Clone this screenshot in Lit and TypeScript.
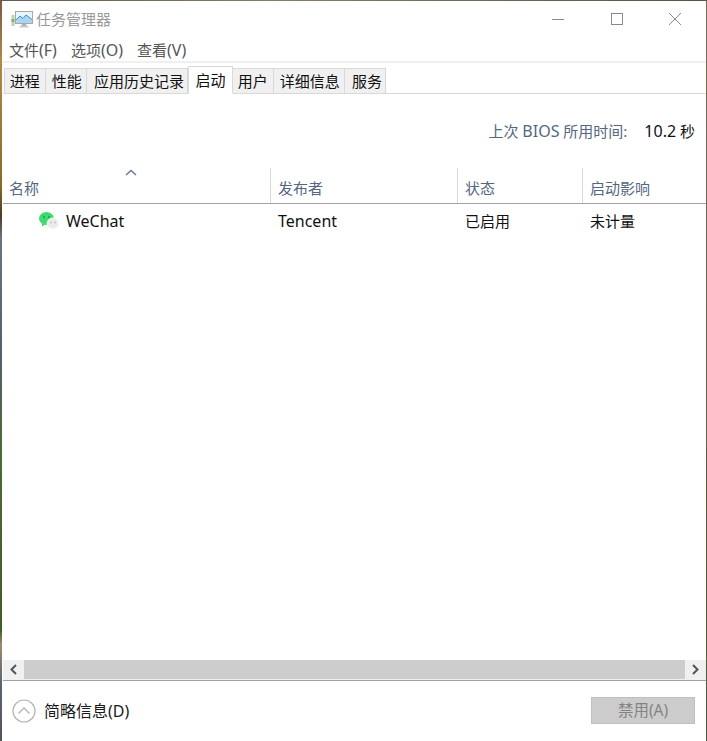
import { LitElement, html, css, svg } from "lit";
import { customElement } from "lit/decorators.js";

const tabs = [
  ["进程", 41.5, 0], ["性能", 41.5, 2], ["应用历史记录", 101, 4], ["启动", 45, 0], ["用户", 40.5, 0], ["详细信息", 71.5, 2], ["服务", 41, 4],
] as const;

@customElement("app-root")
export class AppRoot extends LitElement {
  static styles = css`
    :host { display: block; width: 707px; height: 741px; overflow: hidden; font-family: "Noto Sans", "Noto Sans CJK SC", sans-serif; background: #fff; }
    .frame { height: 741px; display: flex; flex-direction: column; }
    .topedge { height: 1px; flex: none; background: linear-gradient(90deg, #6b5a4a, #8a7a68 40%, #5c5048); }
    .mid { flex: 1; display: flex; min-height: 0; }
    .ledge { width: 2px; flex: none; background: linear-gradient(180deg, #7a5a45 0%, #b08a4a 8%, #8a6a2a 25%, #4a3c28 29%, #6a7484 32%, #55606a 48%, #4c6a3a 60%, #3e5e2c 85%, #a08a70 87%, #5c6470 92%, #50565c 100%); }
    .redge { width: 1px; flex: none; background: linear-gradient(180deg, #7a6a55 0%, #6a5a3c 50%, #4c5a3c 100%); }
    .win { flex: 1; min-width: 0; display: flex; flex-direction: column; background: #fff; padding-left: 1px; }
    .l { font-size: 16px; }
    .title { height: 38px; flex: none; display: flex; align-items: center; padding: 0 0 3px 8px; box-sizing: border-box; color: #999; font-size: 15px; }
    .title svg { margin-right: 3px; flex: none; }
    .caps { margin-left: auto; display: flex; align-items: center; }
    .cap { width: 58.5px; height: 35px; display: flex; align-items: center; justify-content: center; }
    .menu { height: 22px; flex: none; display: flex; align-items: center; padding-left: 6px; gap: 14px; font-size: 15px; color: #555; line-height: 20px; }
    .rule { height: 2px; flex: none; background: #f0f0f0; }
    .tabs { height: 31px; flex: none; display: flex; align-items: flex-end; padding-left: 1px; border-bottom: 1px solid #d9d9d9; box-sizing: border-box; }
    .tab { box-sizing: border-box; height: 26px; margin-bottom: -1px; padding-bottom: 2px; display: flex; align-items: center; justify-content: center; background: #f0f0f0; border: 1px solid #d9d9d9; border-left: 0; font-size: 15px; color: #111; }
    .tab:first-child { border-left: 1px solid #d9d9d9; }
    .tab.on { height: 28px; background: #fff; border-left: 1px solid #d9d9d9; border-bottom-color: #fff; position: relative; z-index: 1; }
    .body { flex: 1; min-height: 0; display: flex; flex-direction: column; }
    .bios { height: 74px; flex: none; display: flex; justify-content: flex-end; align-items: flex-start; padding: 26px 11px 0 0; box-sizing: border-box; font-size: 15px; color: #55677f; }
    .bios b { font-weight: 400; color: #111; margin-left: 17px; }
    .head { height: 36px; flex: none; display: grid; grid-template-columns: 268px 187px 125px 1fr; border-bottom: 1px solid #a0a0a0; box-sizing: border-box; font-size: 15px; color: #55677f; position: relative; }
    .hc { display: flex; align-items: flex-end; padding: 0 0 5px 7px; border-right: 1px solid #d9d9d9; line-height: 20px; }
    .hc:first-of-type { padding-left: 6px; }
    .hc:last-child { border-right: 0; }
    .sort { position: absolute; left: 121px; top: 0; }
    .row { height: 36px; flex: none; display: grid; grid-template-columns: 268px 187px 125px 1fr; align-items: center; font-size: 15px; color: #111; }
    .rc { padding-left: 7px; padding-bottom: 3px; line-height: 20px; }
    .rc.name { display: flex; align-items: center; padding-left: 36px; gap: 7px; }
    .rest { flex: 1; min-height: 0; }
    .sb { height: 20px; flex: none; display: flex; align-items: stretch; background: #f0f0f0; box-sizing: border-box; padding-bottom: 1px; }
    .sb .btn { width: 21px; flex: none; display: flex; align-items: center; justify-content: center; }
    .sb .thumb { flex: 1; background: #cdcdcd; }
    .foot { height: 61px; flex: none; border-top: 1px solid #a0a0a0; box-sizing: border-box; display: flex; align-items: center; padding: 0 11px 1px 9px; font-size: 16px; color: #1a1a1a; }
    .foot svg { margin-right: 8px; flex: none; }
    .foot span { padding-bottom: 2px; }
    .dis { margin-left: auto; width: 104px; height: 27px; padding-bottom: 2px; box-sizing: border-box; background: #cccccc; border: 1px solid #bfbfbf; display: flex; align-items: center; justify-content: center; color: #838383; font-size: 15.5px; }
  `;

  render() {
    return html`
      <div class="frame">
        <div class="topedge"></div>
        <div class="mid">
          <div class="ledge"></div>
          <div class="win">
            <div class="title">
              <svg width="22" height="18" viewBox="0 0 22 18">
                <rect x="0.5" y="5" width="3" height="11" fill="#c8c8c8"/>
                <rect x="0.5" y="9" width="3" height="3" fill="#6fc24a"/>
                <rect x="4.5" y="1.5" width="17" height="12" fill="#eaf4fb" stroke="#a8a8a8"/>
                <path d="M5 11 L9 6.5 L12 9 L15 5.5 L21 10 V13 H5 Z" fill="#a9d5f2"/>
                <path d="M5 10 L9 6 L12 8.500 L15 5 L21 9.500" fill="none" stroke="#2f8ad0" stroke-width="1"/>
                <rect x="10.500" y="14" width="5" height="2" fill="#b5b5b5"/>
                <rect x="8.500" y="16" width="9" height="1.500" fill="#c8c8c8"/>
              </svg>
              <span>任务管理器</span>
              <div class="caps">
                <div class="cap"><svg width="12" height="12" viewBox="0 0 12 12"><path d="M0 6.500H12" stroke="#8a8a8a" stroke-width="1"/></svg></div>
                <div class="cap"><svg width="12" height="12" viewBox="0 0 12 12"><rect x="0.500" y="0.500" width="11" height="11" fill="none" stroke="#8a8a8a"/></svg></div>
                <div class="cap"><svg width="12" height="12" viewBox="0 0 12 12"><path d="M0 0L12 12M12 0L0 12" stroke="#8a8a8a" stroke-width="1"/></svg></div>
              </div>
            </div>
            <div class="menu"><span>文件<span class="l">(F)</span></span><span>选项<span class="l">(O)</span></span><span>查看<span class="l">(V)</span></span></div>
            <div class="rule"></div>
            <div class="tabs">
              ${tabs.map(([t, w, p], i) => html`<div class="tab ${i === 3 ? "on" : ""}" style="width:${w}px;padding-left:${p}px">${t}</div>`)}
            </div>
            <div class="body">
              <div class="bios"><span>上次 <span class="l">BIOS</span> 所用时间:</span><b><span class="l">10.2</span> 秒</b></div>
              <div class="head">
                <svg class="sort" width="14" height="8" viewBox="0 0 14 8">${svg`<path d="M2 7L7 2.500L12 7" fill="none" stroke="#6a7a90" stroke-width="1.500"/>`}</svg>
                <div class="hc">名称</div><div class="hc">发布者</div><div class="hc">状态</div><div class="hc">启动影响</div>
              </div>
              <div class="row">
                <div class="rc name">
                  <svg width="20" height="17" viewBox="0 0 20 17">
                    <ellipse cx="7.500" cy="6.500" rx="7.500" ry="6.500" fill="#3ddb6e"/>
                    <path d="M3 10.500L3 14.500L7 12Z" fill="#3ddb6e"/>
                    <circle cx="5" cy="5" r="1" fill="#1f9e48"/><circle cx="10" cy="5" r="1" fill="#1f9e48"/>
                    <ellipse cx="14" cy="11.500" rx="6" ry="5.500" fill="#ececec" stroke="#fff" stroke-width="0.800"/>
                    <circle cx="12" cy="10.500" r="0.900" fill="#bdbdbd"/><circle cx="16" cy="10.500" r="0.900" fill="#bdbdbd"/>
                  </svg>
                  <span class="l">WeChat</span>
                </div>
                <div class="rc"><span class="l">Tencent</span></div><div class="rc">已启用</div><div class="rc">未计量</div>
              </div>
              <div class="rest"></div>
              <div class="sb">
                <div class="btn"><svg width="9" height="11" viewBox="0 0 9 11"><path d="M7 1L2.500 5.500L7 10" fill="none" stroke="#555" stroke-width="2"/></svg></div>
                <div class="thumb"></div>
                <div class="btn"><svg width="9" height="11" viewBox="0 0 9 11"><path d="M2 1L6.500 5.500L2 10" fill="none" stroke="#555" stroke-width="2"/></svg></div>
              </div>
              <div class="foot">
                <svg width="24" height="24" viewBox="0 0 24 24"><circle cx="12" cy="12" r="11" fill="#fff" stroke="#b4b4b4" stroke-width="1.200"/><path d="M6.500 14.500L12 9L17.500 14.500" fill="none" stroke="#b4b4b4" stroke-width="1.300"/></svg>
                <span>简略信息(D)</span>
                <div class="dis">禁用(A)</div>
              </div>
            </div>
          </div>
          <div class="redge"></div>
        </div>
      </div>
    `;
  }
}
